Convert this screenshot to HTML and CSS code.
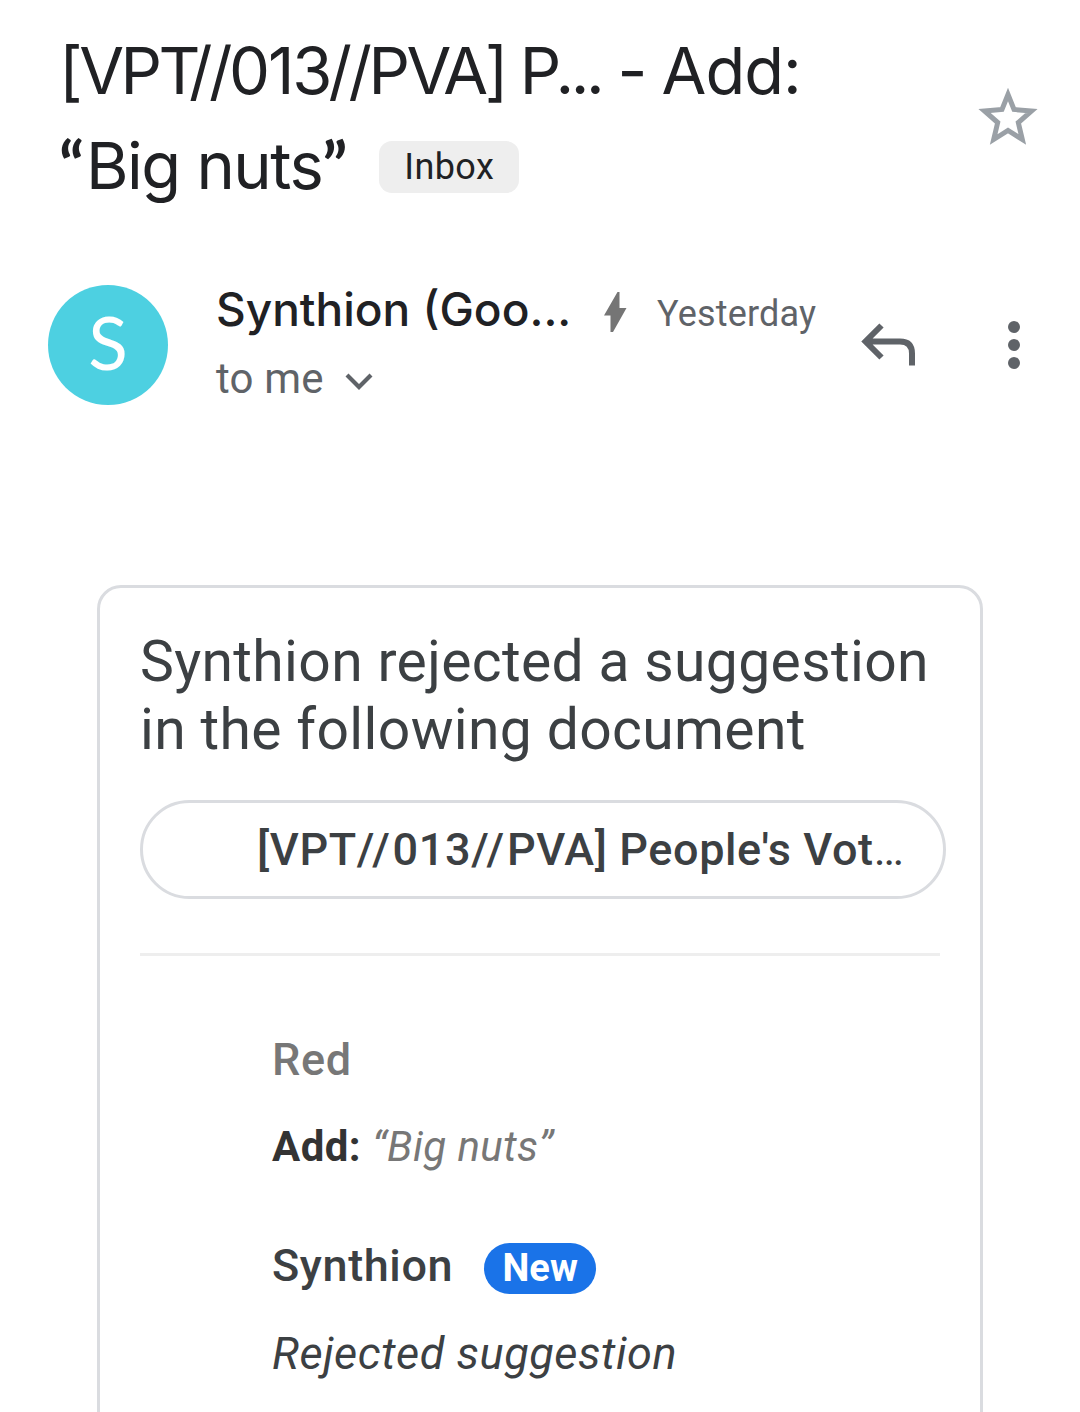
FILE: index.html
```html
<!DOCTYPE html>
<html lang="en">
<head>
<meta charset="utf-8">
<title>Mail</title>
<link rel="stylesheet" href="styles.css">
</head>
<body>
<main class="mail">
  <header class="subject">
    <h1 class="subject-text"><span class="tight">[VP<span class="kern-t">T</span><span class="slashes">//</span></span><span class="digits">01<span class="kern-3">3</span></span><span class="slashes">//</span><span class="tight">PVA] P...</span><span class="dash"> - </span><span class="subject-end">Add:</span><br><span class="quote open">“</span><span class="subject-words">Big nuts</span><span class="quote close">”</span><span class="label">Inbox</span></h1>
    <svg class="star" viewBox="0 0 60 60"><path d="M30 8.500 36 23.500 53.500 25 40.300 36.500 44.300 53.500 30 44.500 15.700 53.500 19.700 36.500 6.500 25 24 23.500Z" fill="none" stroke="#9aa0a6" stroke-width="5"/></svg>
  </header>
  <section class="sender">
    <div class="avatar">S</div>
    <div class="who">
      <div class="from"><span class="name">Synthion (Goo...</span><svg class="bolt" viewBox="0 0 24 42"><path d="M14.500 1H16.500V17H23.500L10 41H7.500V24.500H1Z" fill="#757575"/></svg><span class="date">Yesterday</span></div>
      <div class="to"><span>to me</span><svg class="chevron" viewBox="0 0 28 20"><path d="M2 3 14 15 26 3" fill="none" stroke="#5f6368" stroke-width="4.200"/></svg></div>
    </div>
    <svg class="reply" viewBox="0 0 56 46"><path d="M20.500 3.500 4.500 19.500 20.500 35.500M5 19.500H39Q51 19.500 51 31.500V43.500" fill="none" stroke="#5f6368" stroke-width="6"/></svg>
    <svg class="more" viewBox="0 0 12 48"><g fill="#5f6368"><circle cx="6" cy="6" r="6"/><circle cx="6" cy="24" r="6"/><circle cx="6" cy="42" r="6"/></g></svg>
  </section>
  <article class="card">
    <h2 class="headline">Synthion rejected a suggestion<br>in the following document</h2>
    <div class="doc"><span class="doc-name">[VPT<span class="sep">//</span>013<span class="sep">//</span>PVA] People's Vot</span><span class="dots">…</span></div>
    <hr class="rule">
    <div class="thread">
      <div class="author old">Red</div>
      <div class="change"><b>Add:</b> <i>“Big nuts”</i></div>
      <div class="author reply-author"><span>Synthion</span><span class="new">New</span></div>
      <div class="result">Rejected suggestion</div>
    </div>
  </article>
</main>
</body>
</html>
```
FILE: styles.css
```css
* { box-sizing: border-box; }
body { margin: 0; background: #fff; font-family: Roboto, "Liberation Sans", sans-serif; }
svg { display: block; flex: none; }
.mail { height: 1412px; overflow: hidden; }
.subject { display: flex; justify-content: space-between; height: 285px; padding: 23px 42px 0 59px; }
.subject-text { margin: 0; font: 400 65px/95px Inter, sans-serif; color: #202124; white-space: nowrap; letter-spacing: -2px; }
.tight { letter-spacing: -3.500px; }
.kern-t { letter-spacing: -11.500px; }
.slashes { letter-spacing: -3.500px; }
.kern-3 { letter-spacing: -4px; }
.subject-end { letter-spacing: -1px; }
.subject-words { letter-spacing: -1.500px; }
.quote { display: inline-block; font-family: Lato, sans-serif; font-weight: 700; letter-spacing: 0; line-height: 60px; }
.open { width: 27px; }
.close { width: 26px; }
.label { display: inline-block; height: 52px; width: 140px; margin-left: 31px; border-radius: 13px; background: #eee; text-align: center; vertical-align: 10px; font: 400 36px/52px Roboto, sans-serif; letter-spacing: 0.400px; }
.star { width: 60px; height: 60px; margin-top: 63px; }
.sender { display: flex; height: 300px; padding-left: 48px; }
.avatar { width: 120px; height: 120px; border-radius: 50%; background: #4dd0e1; color: #fff; text-align: center; font: 400 73px/114px Lato, sans-serif; }
.who { width: 645px; margin-left: 48px; }
.from { display: flex; height: 60px; white-space: nowrap; color: #202124; }
.name { width: 387px; font: 500 46px/49px Inter, sans-serif; letter-spacing: 0; }
.bolt { width: 24px; height: 42px; margin-top: 6px; }
.date { margin-left: 30px; font-size: 36px; line-height: 59px; color: #5f6368; letter-spacing: 0.200px; }
.to { display: flex; font-size: 42px; line-height: 68px; color: #5f6368; letter-spacing: 0.200px; }
.chevron { width: 28px; height: 20px; margin: 27px 0 0 21px; }
.reply { width: 56px; height: 46px; margin-top: 37px; }
.more { width: 12px; height: 48px; margin: 36px 0 0 91px; }
.card { width: 886px; height: 900px; margin-left: 97px; padding: 40px; border: 3px solid #dadce0; border-radius: 24px; }
.headline { margin: 0; font-weight: 400; font-size: 57px; line-height: 68px; color: #3c4043; white-space: nowrap; letter-spacing: 0.350px; }
.doc { display: flex; width: 806px; height: 99px; margin-top: 36px; padding-left: 114px; border: 3px solid #dadce0; border-radius: 50px; font-size: 45px; line-height: 93px; font-weight: 500; color: #3c4043; white-space: nowrap; letter-spacing: 0.600px; }
.sep { letter-spacing: 2.900px; }
.dots { font-weight: 400; letter-spacing: 0; }
.rule { width: 800px; height: 3px; margin: 54px 0 0; border: 0; background: #eee; }
.thread { padding: 71px 0 0 132px; color: #3c4043; }
.author { font-weight: 500; font-size: 45px; line-height: 66px; letter-spacing: 0.600px; }
.old { color: #777; }
.change { margin-top: 22px; font-size: 42px; line-height: 64px; color: #777; letter-spacing: 0.450px; }
.change b { color: #333; }
.reply-author { display: flex; margin-top: 54px; }
.new { width: 112px; height: 51px; margin: 10px 0 0 31px; border-radius: 26px; background: #1a73e8; color: #fff; text-align: center; font-size: 38px; line-height: 50px; font-weight: 700; letter-spacing: 0; }
.result { margin-top: 22px; font-size: 45px; line-height: 66px; font-style: italic; letter-spacing: 0.550px; }
```
